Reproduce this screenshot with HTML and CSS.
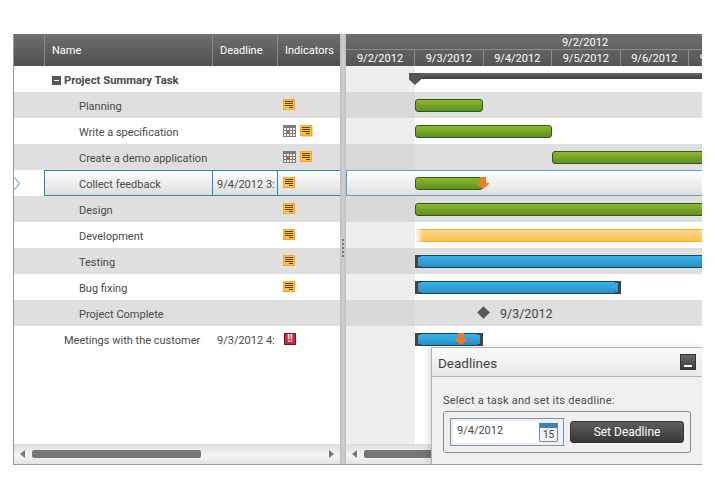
FILE: index.html
```html
<!DOCTYPE html>
<html lang="en">
  <head>
    <meta charset="UTF-8" />
    <title>Gantt Deadlines</title>
    <link rel="stylesheet" href="styles.css">
  </head>
  <body>
    <svg class="defs" width="0" height="0">
      <symbol id="note" viewBox="0 0 12 11">
        <rect x="0.5" y="0.5" width="11" height="10" fill="#fdc047" stroke="#f6a91f" />
        <path d="M2 2.500h8M2 4.500h8M2 6.500h8M6 8.500h4" stroke="#5a4510" fill="none" />
      </symbol>
      <symbol id="cal" viewBox="0 0 13 12">
        <rect width="13" height="12" fill="#7d7d7d" />
        <path d="M1 3h2v2H1zM4 3h2v2H4zM7 3h2v2H7zM10 3h2v2h-2zM1 6h2v2H1zM7 6h2v2H7zM10 6h2v2h-2zM1 9h2v2H1zM4 9h2v2H4zM7 9h2v2H7zM10 9h2v2h-2z" fill="#f4f4f4" />
        <rect x="4" y="5" width="3" height="3" fill="#e2570f" />
      </symbol>
      <symbol id="down" viewBox="0 0 12 12">
        <path d="M3 0h6v6h3v1L6 12 0 7V6h3z" fill="#f07a26" />
      </symbol>
    </svg>

    <div class="gantt">
      <div class="grid-pane">
        <div class="grid-head">
          <div class="th"></div>
          <div class="th">Name</div>
          <div class="th">Deadline</div>
          <div class="th">Indicators</div>
        </div>
        <div class="grid-body">
          <div class="tr">
            <div class="td"></div>
            <div class="td summary"><span class="toggle"></span>Project Summary Task</div>
            <div class="td"></div>
            <div class="td"></div>
          </div>
          <div class="tr alt">
            <div class="td"></div>
            <div class="td task">Planning</div>
            <div class="td"></div>
            <div class="td icons"><svg class="ic"><use href="#note" /></svg></div>
          </div>
          <div class="tr">
            <div class="td"></div>
            <div class="td task">Write a specification</div>
            <div class="td"></div>
            <div class="td icons"><svg class="ic-cal"><use href="#cal" /></svg><svg class="ic shadowed"><use href="#note" /></svg></div>
          </div>
          <div class="tr alt">
            <div class="td"></div>
            <div class="td task">Create a demo application</div>
            <div class="td"></div>
            <div class="td icons"><svg class="ic-cal"><use href="#cal" /></svg><svg class="ic"><use href="#note" /></svg></div>
          </div>
          <div class="tr selected">
            <div class="td marker">
              <svg class="arrow" viewBox="0 0 6 13"><path d="M0.500 0.500L5.500 6.500 0.500 12.500" /></svg>
            </div>
            <div class="td task">Collect feedback</div>
            <div class="td date">9/4/2012 3:</div>
            <div class="td icons"><svg class="ic"><use href="#note" /></svg></div>
          </div>
          <div class="tr alt">
            <div class="td"></div>
            <div class="td task">Design</div>
            <div class="td"></div>
            <div class="td icons"><svg class="ic"><use href="#note" /></svg></div>
          </div>
          <div class="tr">
            <div class="td"></div>
            <div class="td task">Development</div>
            <div class="td"></div>
            <div class="td icons"><svg class="ic"><use href="#note" /></svg></div>
          </div>
          <div class="tr alt">
            <div class="td"></div>
            <div class="td task">Testing</div>
            <div class="td"></div>
            <div class="td icons"><svg class="ic"><use href="#note" /></svg></div>
          </div>
          <div class="tr">
            <div class="td"></div>
            <div class="td task">Bug fixing</div>
            <div class="td"></div>
            <div class="td icons"><svg class="ic"><use href="#note" /></svg></div>
          </div>
          <div class="tr alt">
            <div class="td"></div>
            <div class="td task">Project Complete</div>
            <div class="td"></div>
            <div class="td"></div>
          </div>
          <div class="tr">
            <div class="td"></div>
            <div class="td top">Meetings with the customer</div>
            <div class="td date">9/3/2012 4:</div>
            <div class="td icons"><span class="alert">!!</span></div>
          </div>
        </div>
        <div class="scrollbar">
          <span class="sb-left"></span>
          <span class="thumb thumb-grid"></span>
          <span class="sb-right"></span>
        </div>
      </div>

      <div class="splitter"><span class="grip"></span></div>

      <div class="time-pane">
        <div class="time-head">
          <div class="time-top">9/2/2012</div>
          <div class="time-days">
            <div class="day">9/2/2012</div>
            <div class="day">9/3/2012</div>
            <div class="day">9/4/2012</div>
            <div class="day">9/5/2012</div>
            <div class="day">9/6/2012</div>
            <div class="day">9/7/2012</div>
          </div>
        </div>
        <div class="time-body">
          <div class="lane">
            <span class="bar-summary"></span>
            <span class="summary-pin"></span>
          </div>
          <div class="lane alt"><span class="bar green" style="left: 69px; width: 68px"></span></div>
          <div class="lane"><span class="bar green" style="left: 69px; width: 137px"></span></div>
          <div class="lane alt"><span class="bar green" style="left: 206px; width: 200px"></span></div>
          <div class="lane selected">
            <span class="bar green" style="left: 68px; width: 68px"></span>
            <svg class="flag" style="left: 130px"><use href="#down" /></svg>
          </div>
          <div class="lane alt"><span class="bar green" style="left: 69px; width: 340px"></span></div>
          <div class="lane"><span class="bar yellow" style="left: 69px; width: 340px"></span></div>
          <div class="lane alt"><span class="bar blue" style="left: 69px; width: 340px"></span></div>
          <div class="lane"><span class="bar blue capped" style="left: 69px; width: 206px"></span></div>
          <div class="lane alt milestone-lane">
            <span class="diamond"></span>
            <span class="milestone-date">9/3/2012</span>
          </div>
          <div class="lane">
            <span class="bar blue capped" style="left: 69px; width: 68px"></span>
            <svg class="flag" style="left: 109px"><use href="#down" /></svg>
          </div>
        </div>
        <div class="scrollbar">
          <span class="sb-left"></span>
          <span class="thumb thumb-time"></span>
        </div>
      </div>

      <div class="panel">
        <div class="panel-head">
          <span>Deadlines</span>
          <button class="min-btn" type="button"><span></span></button>
        </div>
        <div class="panel-body">
          <p class="panel-label">Select a task and set its deadline:</p>
          <div class="panel-box">
            <div class="date-input">
              <span class="date-value">9/4/2012</span>
              <span class="cal-btn"><span>15</span></span>
            </div>
            <button class="set-btn" type="button">Set Deadline</button>
          </div>
        </div>
      </div>
    </div>
  </body>
</html>
```

FILE: styles.css
```css
/* General Styles */
body {
  margin: 0;
  background: #fff;
  font-family: Roboto, "Noto Sans", Arial, sans-serif;
  font-size: 11px;
  color: #4a4a4a;
}

.defs {
  position: absolute;
}

.gantt {
  position: relative;
  display: flex;
  width: 689px;
  height: 431px;
  margin: 34px 0 0 13px;
  border-left: 1px solid #999;
  border-bottom: 1px solid #999;
  box-sizing: border-box;
  overflow: hidden;
}

/* Grid Pane */
.grid-pane {
  display: flex;
  flex-direction: column;
  width: 326px;
  flex: none;
}

.grid-head {
  display: grid;
  grid-template-columns: 30px 168px 65px 63px;
  height: 32px;
  background: linear-gradient(#707070, #4e4e4e);
}

.th {
  display: flex;
  align-items: center;
  padding-left: 7px;
  border-left: 1px solid #8a8a8a;
  color: #fff;
  white-space: nowrap;
  overflow: hidden;
}

.th:first-child {
  border-left: none;
}

.grid-body {
  flex: 1;
}

.tr {
  display: grid;
  grid-template-columns: 30px 168px 65px 63px;
  height: 26px;
}

.tr.alt {
  background: #dfdfdf;
}

.td {
  display: flex;
  align-items: center;
  padding-top: 2px;
  white-space: nowrap;
  overflow: hidden;
  box-sizing: border-box;
}

.summary {
  padding-left: 8px;
  font-size: 11.300px;
  font-weight: bold;
}

.toggle {
  position: relative;
  width: 9px;
  height: 9px;
  margin-right: 3px;
  background: #555;
}

.toggle::after {
  content: "";
  position: absolute;
  left: 2px;
  top: 4px;
  width: 5px;
  height: 1px;
  background: #fff;
}

.task {
  padding-left: 35px;
}

.top {
  padding-left: 20px;
}

.date {
  padding-left: 5px;
}

.icons {
  align-items: flex-start;
  gap: 4px;
  padding-left: 6px;
  padding-top: 7px;
}

.ic {
  width: 12px;
  height: 11px;
}

.ic.shadowed {
  filter: drop-shadow(1px 1px 0 #e6d6b8);
}

.ic-cal {
  width: 13px;
  height: 12px;
}

.alert {
  width: 10px;
  height: 10px;
  margin-left: 1px;
  border: 1px solid #7e1420;
  background: #c8283c;
  color: #fff;
  font-size: 10px;
  font-weight: bold;
  line-height: 10px;
  text-align: center;
}

.tr.selected {
  background: linear-gradient(#fff, #dcdcdc);
}

.tr.selected .td {
  border-top: 1px solid #2e88ad;
  border-bottom: 1px solid #2e88ad;
  border-left: 1px solid #2e88ad;
}

.tr.selected .task {
  padding-left: 34px;
}

.tr.selected .date {
  padding-left: 4px;
}

.tr.selected .icons {
  padding-left: 5px;
  padding-top: 6px;
}

.tr.selected .marker {
  padding-top: 0;
  border: none;
  background: #fff;
}

.arrow {
  width: 6px;
  height: 13px;
  fill: #fff;
  stroke: #2e88ad;
}

/* Splitter */
.splitter {
  display: flex;
  align-items: center;
  justify-content: center;
  width: 6px;
  flex: none;
  background: linear-gradient(90deg, #c0c0c0, #cfcfcf 60%, #bdbdbd);
}

.grip {
  width: 2px;
  height: 20px;
  background: repeating-linear-gradient(#777 0 2px, transparent 2px 4px);
}

/* Timeline Pane */
.time-pane {
  display: flex;
  flex-direction: column;
  flex: 1;
  min-width: 0;
}

.time-head {
  height: 32px;
  background: linear-gradient(#6e6e6e, #555);
  color: #fff;
}

.time-top {
  height: 16px;
  padding-left: 122px;
  border-bottom: 1px solid #8a8a8a;
  box-sizing: border-box;
  line-height: 18px;
  text-align: center;
}

.time-days {
  display: flex;
  height: 16px;
  overflow: hidden;
}

.day {
  width: 68.500px;
  flex: none;
  box-sizing: border-box;
  border-left: 1px solid #8a8a8a;
  line-height: 17px;
  text-align: center;
}

.day:first-child {
  width: 68px;
  border-left: none;
}

.time-body {
  flex: 1;
  background: linear-gradient(90deg, #eee 69px, #fff 69px);
}

.lane {
  position: relative;
  height: 26px;
  background: linear-gradient(90deg, #eee 69px, #fff 69px);
}

.lane.alt {
  background: linear-gradient(90deg, #d9d9d9 69px, #dfdfdf 69px);
}

.lane.selected {
  background: linear-gradient(#fff, #e0e0e0);
  border: 1px solid #5da3c0;
  border-right: none;
  box-sizing: border-box;
}

.bar {
  position: absolute;
  top: 7px;
  height: 13px;
  box-sizing: border-box;
  border-radius: 3px;
}

.lane.selected .bar {
  top: 6px;
}

.green {
  background: linear-gradient(#8fb82a, #5d8f24);
  border: 1px solid #2f5a1c;
}

.yellow {
  border-radius: 0;
  border-top: 1px solid #f3a92a;
  border-bottom: 1px solid #f3a92a;
  background: linear-gradient(#fdd78c, #fcc353);
}

.yellow::before {
  content: "";
  position: absolute;
  left: 0;
  top: -1px;
  bottom: -1px;
  width: 8px;
  background: linear-gradient(90deg, #fff, rgba(255, 255, 255, 0));
}

.blue {
  border-radius: 0;
  background: linear-gradient(#35b4ec, #2a8fc4);
  border: 1px solid #17435e;
}

.blue::before {
  content: "";
  position: absolute;
  left: -1px;
  top: -1px;
  bottom: -1px;
  width: 3px;
  border: 2px solid #444;
  border-left-width: 3px;
  border-right: none;
}

.capped::after {
  content: "";
  position: absolute;
  right: -1px;
  top: -1px;
  bottom: -1px;
  width: 3px;
  border: 2px solid #444;
  border-right-width: 3px;
  border-left: none;
}

.bar-summary {
  position: absolute;
  left: 69px;
  right: 0;
  top: 7px;
  height: 6px;
  background: linear-gradient(#6a6a6a, #3e3e3e);
}

.summary-pin {
  position: absolute;
  left: 63px;
  top: 7px;
  width: 12px;
  height: 12px;
  background: #555;
  clip-path: polygon(0 0, 100% 0, 100% 55%, 50% 100%, 0 55%);
}

.flag {
  position: absolute;
  top: 6px;
  width: 12px;
  height: 12px;
}

.lane:last-child .flag {
  top: 7px;
}

.diamond {
  position: absolute;
  left: 133px;
  top: 8px;
  width: 9px;
  height: 9px;
  background: #5a5a5a;
  transform: rotate(45deg);
}

.milestone-date {
  position: absolute;
  left: 154px;
  top: 6px;
  font-size: 12.500px;
  color: #444;
}

/* Scrollbars */
.scrollbar {
  position: relative;
  flex: none;
  height: 20px;
  background: linear-gradient(#ddd, #f4f4f4 55%, #e4e4e4);
}

.thumb {
  position: absolute;
  top: 6px;
  height: 8px;
  border-radius: 2px;
  background: #777;
}

.thumb-grid {
  left: 18px;
  width: 169px;
}

.thumb-time {
  left: 18px;
  width: 200px;
}

.sb-left,
.sb-right {
  position: absolute;
  top: 6px;
  width: 0;
  height: 0;
  border-top: 4px solid transparent;
  border-bottom: 4px solid transparent;
}

.sb-left {
  left: 6px;
  border-right: 5px solid #777;
}

.sb-right {
  right: 6px;
  border-left: 5px solid #777;
}

/* Deadlines Panel */
.panel {
  position: absolute;
  left: 417px;
  top: 313px;
  width: 271px;
  height: 118px;
  box-sizing: border-box;
  border: 1px solid #b4b4b4;
  border-right: none;
  background: #f0f0f0;
  box-shadow: -3px 0 6px rgba(0, 0, 0, 0.12);
}

.panel-head {
  display: flex;
  align-items: center;
  justify-content: space-between;
  height: 28px;
  padding: 0 6px;
  border-bottom: 1px solid #b4b4b4;
  background: linear-gradient(#fafafa, #e8e8e8);
  font-size: 13.500px;
  color: #444;
}

.panel-head > span {
  padding-top: 2px;
}

.min-btn {
  position: relative;
  width: 16px;
  height: 16px;
  padding: 0;
  border: 1px solid #333;
  background: linear-gradient(#6a6a6a, #3c3c3c);
}

.min-btn span {
  position: absolute;
  left: 3px;
  bottom: 2px;
  width: 8px;
  height: 2px;
  background: #fff;
}

.panel-body {
  padding: 16px 11px 0;
}

.panel-label {
  margin: 0 0 3px;
  line-height: 15px;
  letter-spacing: 0.25px;
}

.panel-box {
  display: flex;
  align-items: center;
  gap: 6px;
  height: 42px;
  padding: 0 6px;
  border: 1px solid #8a8a8a;
  border-radius: 3px;
  box-sizing: border-box;
}

.date-input {
  display: flex;
  align-items: center;
  justify-content: space-between;
  width: 114px;
  height: 28px;
  box-sizing: border-box;
  padding: 2px 5px 2px 2px;
  border: 1px solid #7b93ad;
  background: #eef0f2;
}

.date-value {
  display: block;
  width: 82px;
  height: 22px;
  padding-left: 4px;
  background: #fff;
  line-height: 19px;
}

.cal-btn {
  display: block;
  width: 19px;
  height: 19px;
  box-sizing: border-box;
  border: 1px solid #7a8a9a;
  border-top: 5px solid #3f7fb5;
  border-radius: 0 0 2px 2px;
  background: #f2f2f2;
  font-size: 10px;
  line-height: 13px;
  text-align: center;
  color: #444;
}

.set-btn {
  width: 114px;
  height: 22px;
  padding: 0;
  border: 1px solid #333;
  border-radius: 3px;
  background: linear-gradient(#5e5e5e, #383838);
  font-family: inherit;
  font-size: 12px;
  color: #fff;
}
```
